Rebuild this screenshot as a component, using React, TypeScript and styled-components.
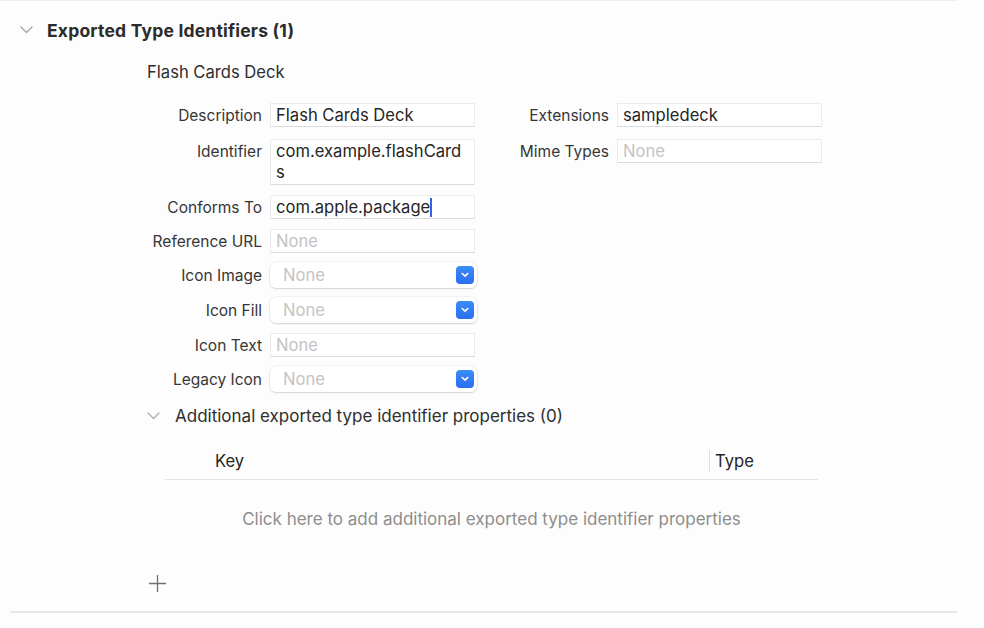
import React from "react";
import styled, { createGlobalStyle } from "styled-components";

const GlobalStyle = createGlobalStyle`
  html, body {
    margin: 0;
    padding: 0;
    background: #fdfdfd;
  }
  body {
    font-family: Inter, "Liberation Sans", Arial, sans-serif;
    color: #262626;
    -webkit-font-smoothing: antialiased;
  }
`;

const Page = styled.div`
  width: 957px;
  height: 628px;
  box-sizing: border-box;
  border-top: 1px solid #efefef;
  display: flex;
  flex-direction: column;
`;

const SectionHeader = styled.div`
  display: flex;
  align-items: center;
  height: 28px;
  margin-top: 15px;
  padding-left: 20px;
  gap: 14px;
`;

const SectionTitle = styled.div`
  font-size: 17.5px;
  font-weight: 700;
  color: #2b2b2b;
  letter-spacing: 0.2px;
`;

const Body = styled.div`
  padding-left: 147px;
  display: flex;
  flex-direction: column;
`;

const ItemTitle = styled.div`
  font-size: 16.6px;
  color: #2e2e2e;
  margin-top: 16px;
  height: 24px;
  line-height: 24px;
`;

const FieldGrid = styled.div`
  display: grid;
  grid-template-columns: 115px 205px 126px 205px;
  grid-auto-rows: minmax(24px, auto);
  column-gap: 8px;
  row-gap: 10px;
  margin-top: 19px;
  align-items: start;
`;

const Label = styled.div<{ $col?: number; $shift?: number }>`
  grid-column: ${(p) => p.$col ?? 1};
  margin-top: ${(p) => p.$shift ?? 0}px;
  padding-top: 1px;
  text-align: right;
  font-size: 15.5px;
  line-height: 23px;
  color: #363636;
  white-space: nowrap;
`;

const TextField = styled.div<{ $placeholder?: boolean; $lines?: number; $shift?: number }>`
  box-sizing: border-box;
  min-height: ${(p) => ((p.$lines ?? 1) > 1 ? "46px" : "24px")};
  margin-top: ${(p) => p.$shift ?? 0}px;
  padding: 0 5px;
  background: #fff;
  border: 1px solid #ececec;
  border-bottom-color: #dcdcdc;
  font-size: 16.6px;
  line-height: ${(p) => ((p.$lines ?? 1) > 1 ? "21px" : "22px")};
  padding-top: ${(p) => ((p.$lines ?? 1) > 1 ? "1px" : "0")};
  color: ${(p) => (p.$placeholder ? "#c4c4c4" : "#262626")};
  word-break: break-all;
`;

const Caret = styled.span`
  display: inline-block;
  width: 2px;
  height: 19px;
  background: #2c66e0;
  vertical-align: -4px;
`;

const Popup = styled.div`
  box-sizing: border-box;
  height: 26px;
  margin-top: -1px;
  width: 207px;
  background: #fff;
  border-radius: 6px;
  box-shadow: 0 0 0 0.5px rgba(0, 0, 0, 0.08), 0 1px 2px rgba(0, 0, 0, 0.14);
  display: flex;
  align-items: center;
  justify-content: space-between;
  padding: 0 3px 0 13px;
  font-size: 16.6px;
  color: #c4c4c4;
`;

const PopupButton = styled.div`
  width: 18px;
  height: 18px;
  border-radius: 4px;
  background: linear-gradient(#3d8bf7, #2a6fee);
  display: flex;
  align-items: center;
  justify-content: center;
`;

const SubHeader = styled.div`
  display: flex;
  align-items: center;
  gap: 15px;
  margin-top: 12px;
  height: 24px;
  font-size: 17px;
  color: #2e2e2e;
`;

const Table = styled.div`
  margin-left: 18px;
  width: 653px;
  margin-top: 14px;
`;

const TableHead = styled.div`
  display: flex;
  align-items: center;
  height: 37px;
  border-bottom: 1.5px solid #e3e3e3;
  font-size: 16.6px;
  color: #262626;
`;

const HeadCell = styled.div<{ $width?: number }>`
  ${(p) => (p.$width ? `width: ${p.$width}px;` : "flex: 1;")}
  box-sizing: border-box;
  height: 22px;
  line-height: 22px;
`;

const KeyCell = styled(HeadCell)`
  padding-left: 50px;
`;

const TypeCell = styled(HeadCell)`
  border-left: 1.5px solid #dedede;
  padding-left: 5px;
`;

const EmptyMessage = styled.div`
  text-align: center;
  font-size: 17px;
  color: #8d8d8d;
  margin-top: 28px;
  height: 22px;
  line-height: 22px;
`;

const AddButton = styled.div`
  margin-top: 43px;
  width: 20px;
  height: 20px;
  display: flex;
  align-items: center;
  justify-content: center;
`;

const Footer = styled.div`
  margin-top: auto;
  margin-bottom: 15px;
  margin-left: 10px;
  height: 2px;
  background: #e8e8e8;
`;

const Chevron = ({ color = "#a6a6a6" }: { color?: string }) => (
  <svg width="13" height="8" viewBox="0 0 13 8" fill="none">
    <polyline
      points="1,1 6.5,6.5 12,1"
      stroke={color}
      strokeWidth="1.4"
      strokeLinecap="round"
      strokeLinejoin="round"
    />
  </svg>
);

const SmallChevron = () => (
  <svg width="8" height="6" viewBox="0 0 8 6" fill="none">
    <polyline
      points="1.2,1.5 4,4.2 6.8,1.5"
      stroke="#fff"
      strokeWidth="1.6"
      strokeLinecap="round"
      strokeLinejoin="round"
    />
  </svg>
);

const PlusIcon = () => (
  <svg width="19" height="19" viewBox="0 0 19 19" fill="none">
    <path d="M9.5 1v17M1 9.5h17" stroke="#6f6f6f" strokeWidth="1.3" />
  </svg>
);

const PopupField = ({ value }: { value: string }) => (
  <Popup>
    <span>{value}</span>
    <PopupButton>
      <SmallChevron />
    </PopupButton>
  </Popup>
);

export default function App() {
  return (
    <>
      <GlobalStyle />
      <Page>
        <SectionHeader>
          <Chevron />
          <SectionTitle>Exported Type Identifiers (1)</SectionTitle>
        </SectionHeader>
        <Body>
          <ItemTitle>Flash Cards Deck</ItemTitle>
          <FieldGrid>
            <Label>Description</Label>
            <TextField>Flash Cards Deck</TextField>
            <Label $col={3}>Extensions</Label>
            <TextField>sampledeck</TextField>

            <Label $shift={2}>Identifier</Label>
            <TextField $lines={2} $shift={2}>
              com.example.flashCards
            </TextField>
            <Label $col={3} $shift={2}>
              Mime Types
            </Label>
            <TextField $placeholder $shift={2}>
              None
            </TextField>

            <Label>Conforms To</Label>
            <TextField>
              com.apple.package
              <Caret />
            </TextField>

            <Label>Reference URL</Label>
            <TextField $placeholder>None</TextField>

            <Label>Icon Image</Label>
            <PopupField value="None" />

            <Label>Icon Fill</Label>
            <PopupField value="None" />

            <Label>Icon Text</Label>
            <TextField $placeholder>None</TextField>

            <Label>Legacy Icon</Label>
            <PopupField value="None" />
          </FieldGrid>

          <SubHeader>
            <Chevron color="#b0b0b0" />
            <span>Additional exported type identifier properties (0)</span>
          </SubHeader>

          <Table>
            <TableHead>
              <KeyCell $width={544}>Key</KeyCell>
              <TypeCell>Type</TypeCell>
            </TableHead>
            <EmptyMessage>
              Click here to add additional exported type identifier properties
            </EmptyMessage>
          </Table>

          <AddButton>
            <PlusIcon />
          </AddButton>
        </Body>
        <Footer />
      </Page>
    </>
  );
}
